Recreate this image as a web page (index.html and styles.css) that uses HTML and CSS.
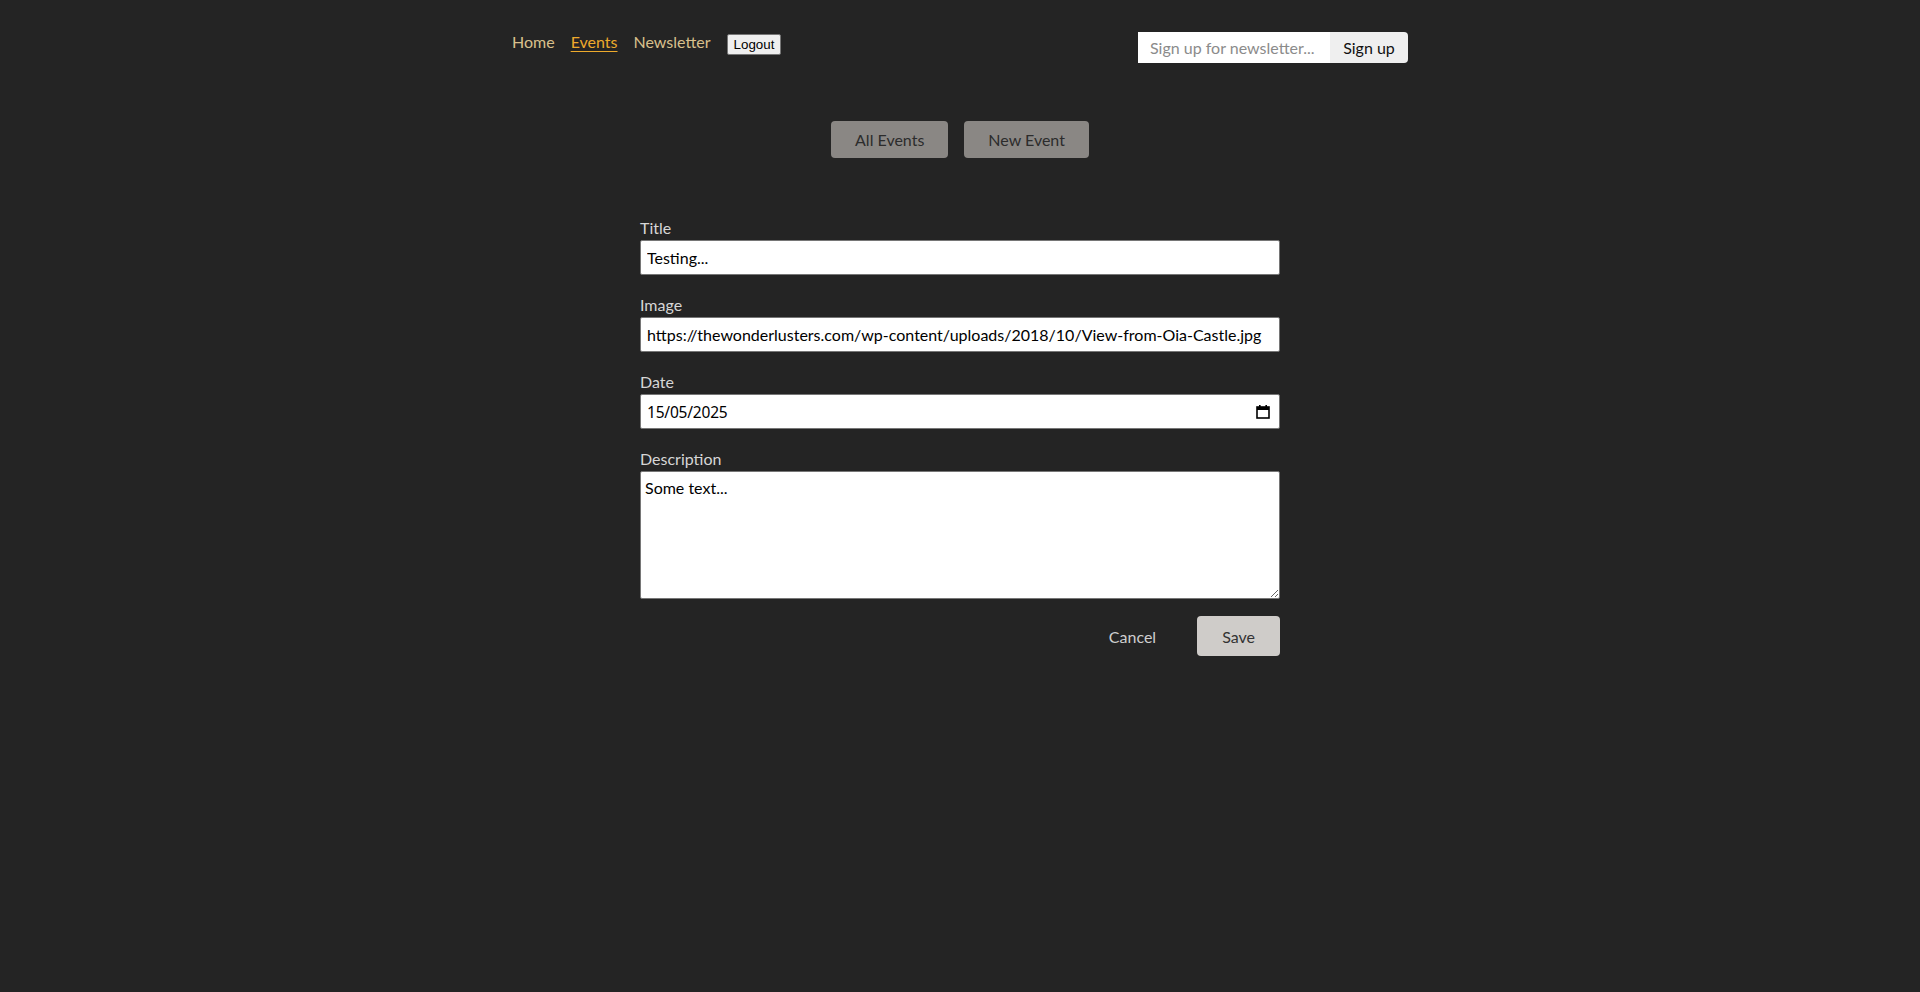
FILE: index.html
```html
<!DOCTYPE html>
<html lang="en">
<head>
<meta charset="utf-8">
<title>Events</title>
<link rel="stylesheet" href="styles.css">
</head>
<body>
<header class="header">
  <nav class="nav">
    <a class="nav-link" href="#">Home</a>
    <a class="nav-link active" href="#">Events</a>
    <a class="nav-link" href="#">Newsletter</a>
    <button class="logout" type="button">Logout</button>
  </nav>
  <form class="newsletter">
    <input class="newsletter-input" type="text" placeholder="Sign up for newsletter...">
    <button class="newsletter-btn" type="button">Sign up</button>
  </form>
</header>

<main class="main">
  <div class="tabs">
    <button class="tab" type="button">All Events</button>
    <button class="tab" type="button">New Event</button>
  </div>

  <form class="event-form">
    <div class="field">
      <label class="label">Title</label>
      <input class="input" type="text" value="Testing...">
    </div>
    <div class="field">
      <label class="label">Image</label>
      <input class="input" type="text" value="https://thewonderlusters.com/wp-content/uploads/2018/10/View-from-Oia-Castle.jpg">
    </div>
    <div class="field">
      <label class="label">Date</label>
      <div class="input date-input">
        <span class="date-value">15/05/2025</span>
        <svg class="cal-icon" width="14" height="15" viewBox="0 0 14 15">
          <rect x="1" y="3" width="12" height="11" fill="none" stroke="#000" stroke-width="1.6"/>
          <rect x="1" y="3" width="12" height="3" fill="#000"/>
          <rect x="3" y="1" width="1.6" height="3" fill="#000"/>
          <rect x="9.4" y="1" width="1.6" height="3" fill="#000"/>
        </svg>
      </div>
    </div>
    <div class="field">
      <label class="label">Description</label>
      <textarea class="textarea">Some text...</textarea>
    </div>
    <div class="actions">
      <button class="btn-cancel" type="button">Cancel</button>
      <button class="btn-save" type="button">Save</button>
    </div>
  </form>
</main>
</body>
</html>
```

FILE: styles.css
```css
html, body {
  margin: 0;
  padding: 0;
  background: #242424;
}

body {
  font-family: Lato, "Open Sans", sans-serif;
  font-size: 16px;
  color: #dddddd;
  min-height: 992px;
}

.header {
  width: 896px;
  margin: 0 auto;
  padding-top: 32px;
  display: flex;
  justify-content: space-between;
  align-items: flex-start;
}

.nav {
  display: flex;
  align-items: flex-start;
  gap: 16px;
  line-height: 20px;
}

.nav-link {
  color: #d9c08c;
  text-decoration: none;
  font-size: 16px;
}

.nav-link.active {
  color: #eeaa2c;
  text-decoration: underline;
  text-underline-offset: 3px;
}

.logout {
  font-family: Arial, "Liberation Sans", sans-serif;
  font-size: 13.333px;
  line-height: 15px;
  padding: 1px 6px;
  background: #efefef;
  border: 1px solid #767676;
  border-radius: 2px;
  color: #000;
  height: 21px;
  margin-top: 2px;
}

.newsletter {
  display: flex;
  height: 31px;
}

.newsletter-input {
  width: 192px;
  box-sizing: border-box;
  border: none;
  margin: 0;
  padding: 0 10px 0 12px;
  font-family: inherit;
  font-size: 16px;
  background: #fff;
  color: #000;
  border-radius: 0;
  outline: none;
}

.newsletter-input::placeholder {
  color: #8b8b8b;
}

.newsletter-btn {
  width: 78px;
  border: none;
  margin: 0;
  padding: 0;
  background: #efefef;
  color: #111;
  font-family: inherit;
  font-size: 16px;
  border-radius: 0 4px 4px 0;
}

.main {
  display: flex;
  flex-direction: column;
  align-items: center;
}

.tabs {
  display: flex;
  gap: 16px;
  margin-top: 58px;
}

.tab {
  height: 37px;
  padding: 0 24px;
  border: none;
  border-radius: 4px;
  background: #8a8784;
  color: #2c2c2c;
  font-family: inherit;
  font-size: 16px;
}

.event-form {
  width: 640px;
  margin-top: 60px;
}

.field {
  display: flex;
  flex-direction: column;
  margin-bottom: 20px;
}

.label {
  display: block;
  line-height: 19px;
  margin-bottom: 3px;
  color: #d6d6d6;
  font-size: 16px;
}

.input {
  box-sizing: border-box;
  width: 640px;
  height: 35px;
  margin: 0;
  padding: 0 6px;
  border: 1px solid #767676;
  border-radius: 2px;
  background: #fff;
  color: #000;
  font-family: inherit;
  font-size: 16px;
}

.date-input {
  display: flex;
  align-items: center;
  justify-content: space-between;
  padding: 0 9px 0 6px;
}

.date-value {
  font-family: "Noto Sans", sans-serif;
  font-size: 15.5px;
  letter-spacing: -0.2px;
}

.cal-icon {
  display: block;
}

.textarea {
  box-sizing: border-box;
  width: 640px;
  height: 128px;
  margin: 0;
  padding: 5px 4px;
  border: 1px solid #767676;
  border-radius: 2px;
  background: #fff;
  color: #000;
  font-family: inherit;
  font-size: 16px;
  line-height: 21px;
}

.actions {
  display: flex;
  justify-content: flex-end;
  gap: 16px;
  margin-top: -3px;
}

.btn-cancel,
.btn-save {
  height: 40px;
  padding: 0 25px;
  border: none;
  border-radius: 4px;
  font-family: inherit;
  font-size: 16px;
}

.btn-cancel {
  background: transparent;
  color: #cfcfcf;
}

.btn-save {
  background: #cfccc9;
  color: #333;
}
```
